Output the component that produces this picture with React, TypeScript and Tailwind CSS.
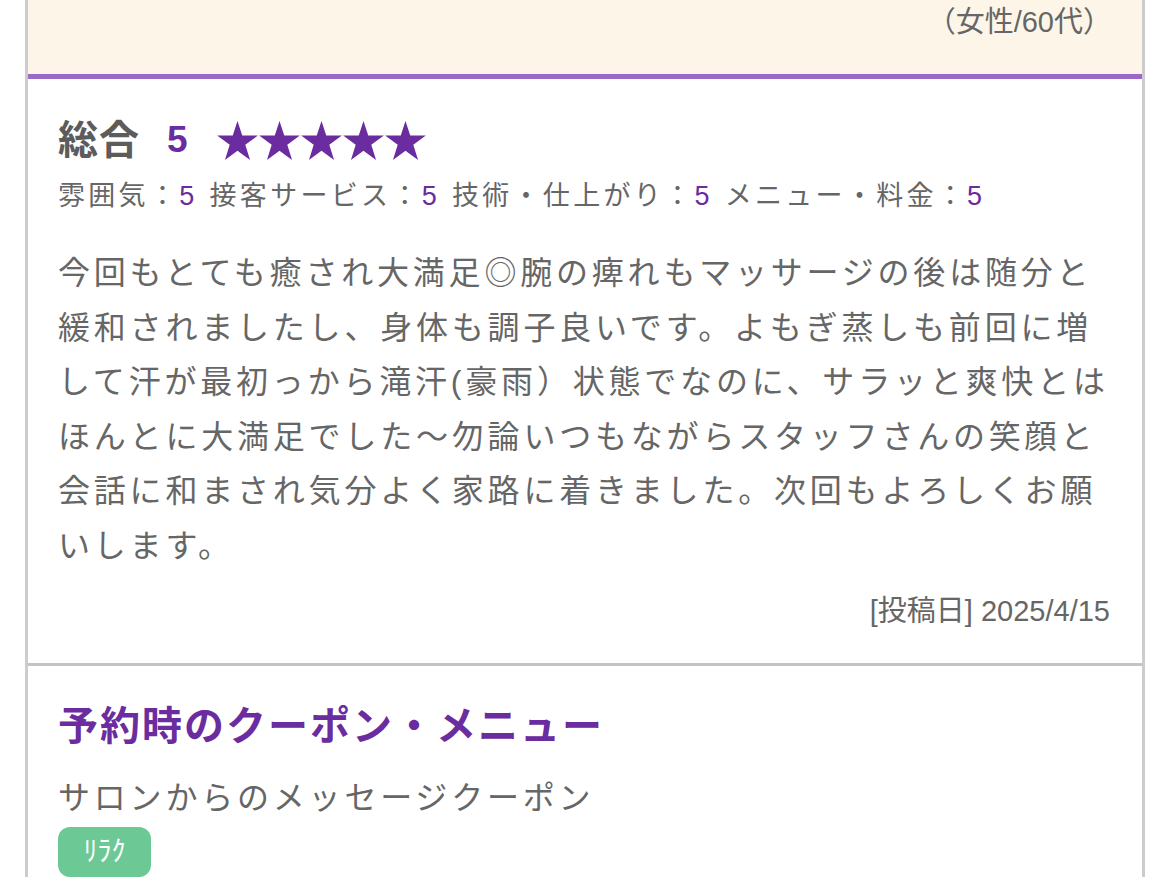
const purple = "text-[#6a2c9e]"

function Star() {
  return (
    <svg viewBox="0 0 24 23" className="h-[39px] w-[41px] fill-[#6a2c9e]">
      <polygon points="12,0 14.8,8.6 24,8.6 16.6,14 19.4,23 12,17.5 4.6,23 7.4,14 0,8.6 9.2,8.6" />
    </svg>
  )
}

const ratings = [
  { label: "雰囲気：", value: "5" },
  { label: "接客サービス：", value: "5" },
  { label: "技術・仕上がり：", value: "5" },
  { label: "メニュー・料金：", value: "5" },
]

export default function App() {
  return (
    <div className="min-h-[879px] bg-white font-['Liberation_Sans','Noto_Sans_CJK_JP',sans-serif] text-[#666]">
      <div className="mx-[25px] border-x-[3px] border-[#cccccc]">
        {/* reviewer info */}
        <div className="flex h-[74px] justify-end bg-[#fdf6e8] pr-[30px] pt-[3px]">
          <span className="text-[29px] leading-[38px] text-[#666]">（女性/60代）</span>
        </div>
        <div className="h-[5px] bg-[#9b69c8]" />

        {/* review body */}
        <div className="px-[30px] pt-[40px] pb-[34px]">
          <div className="flex h-[42px] items-center">
            <span className="text-[40px] font-bold tracking-[1px] text-[#5c5c5c]">総合</span>
            <span className={`ml-[27px] text-[37px] font-bold ${purple}`}>5</span>
            <div className="ml-[29px] flex gap-[1px]">
              <Star />
              <Star />
              <Star />
              <Star />
              <Star />
            </div>
          </div>
          <div className="mt-[15px] flex h-[40px] items-center gap-[12px] text-[27px] tracking-[3.3px]">
            {ratings.map((r) => (
              <span key={r.label}>
                {r.label}
                <span className={purple}>{r.value}</span>
              </span>
            ))}
          </div>
          <p className="mt-[30px] text-[32px] leading-[54.5px] tracking-[3.8px]">
            今回もとても癒され大満足◎腕の痺れもマッサージの後は随分と緩和されましたし、身体も調子良いです。よもぎ蒸しも前回に増して汗が最初っから滝汗(豪雨）状態でなのに、サラッと爽快とはほんとに大満足でした〜勿論いつもながらスタッフさんの笑顔と会話に和まされ気分よく家路に着きました。次回もよろしくお願いします。
          </p>
          <div className="mt-[20px] flex justify-end pr-[2px]">
            <span className="text-[29px] leading-[36px]">[投稿日] 2025/4/15</span>
          </div>
        </div>

        <div className="h-[3px] bg-[#c4c4c4]" />

        {/* coupon / menu */}
        <div className="px-[30px] pt-[38px]">
          <h2 className={`text-[40px] font-bold leading-[44px] tracking-[2px] ${purple}`}>
            予約時のクーポン・メニュー
          </h2>
          <p className="mt-[30px] text-[32px] leading-[40px] tracking-[3.8px]">
            サロンからのメッセージクーポン
          </p>
          <div className="mt-[9px] flex h-[50px] w-[93px] items-center justify-center rounded-[12px] bg-[#6cc995]">
            <span className="text-[28px] text-white">ﾘﾗｸ</span>
          </div>
        </div>
      </div>
    </div>
  )
}
